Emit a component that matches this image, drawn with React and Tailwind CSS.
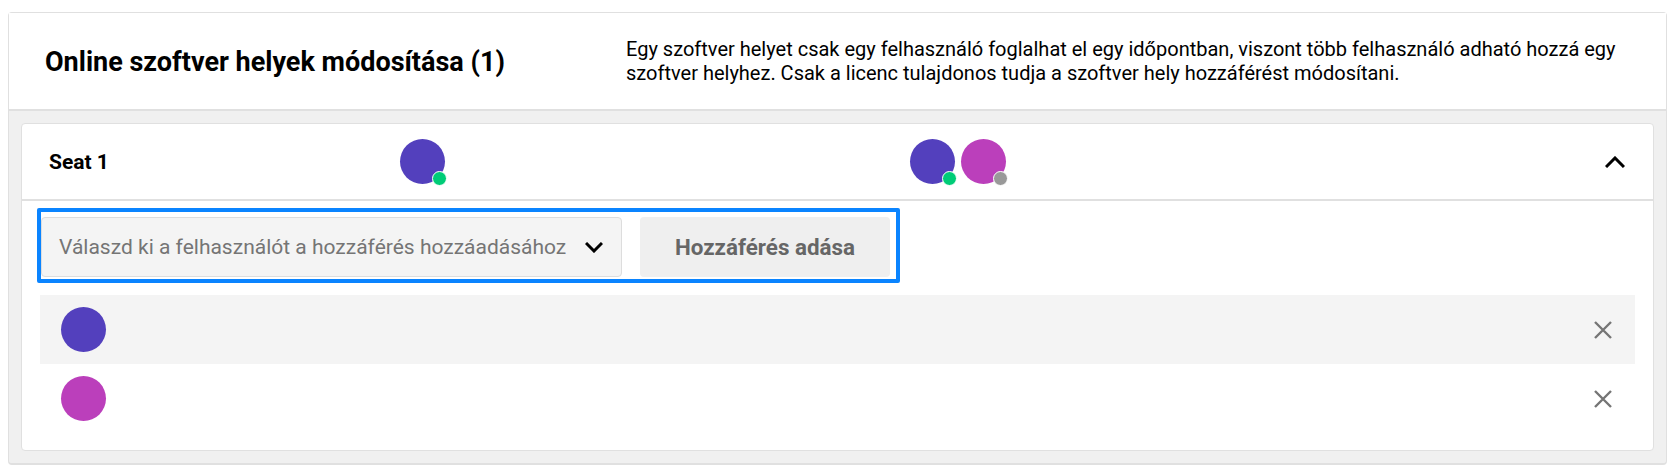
function Avatar({ color, status }) {
  return (
    <div className={`relative h-[45px] w-[45px] flex-shrink-0 rounded-full ${color}`}>
      {status === 'online' && (
        <span className="absolute right-[-2px] bottom-[-2px] h-[15px] w-[15px] rounded-full border border-white bg-[#00cc77]" />
      )}
      {status === 'offline' && (
        <span className="absolute right-[-2px] bottom-[-2px] h-[15px] w-[15px] rounded-full border border-white bg-[#999999]" />
      )}
    </div>
  );
}

function CloseIcon() {
  return (
    <svg width="18" height="18" viewBox="0 0 18 18" fill="none" stroke="#757575" strokeWidth="2.4">
      <path d="M1 1l16 16M17 1L1 17" />
    </svg>
  );
}

function UserRow({ color, shaded }) {
  return (
    <div className={`flex h-[69px] items-center justify-between pr-[23px] pl-[21px] ${shaded ? 'bg-[#f4f4f4]' : ''}`}>
      <Avatar color={color} />
      <CloseIcon />
    </div>
  );
}

export default function App() {
  return (
    <div className="h-[474px] bg-white pt-3 pr-[6px] pl-2 font-['Roboto',sans-serif] text-black">
      <div className="rounded-[4px] border border-b-2 border-[#e0e0e0] bg-[#f0f0f0]">
        <div className="flex h-[98px] items-center border-b-2 border-[#e0e0e0] bg-white pl-[36px]">
          <h1 className="w-[581px] pt-[2px] text-[27px] font-bold">Online szoftver helyek módosítása (1)</h1>
          <p className="w-[1020px] text-[20px] leading-[24px]">
            Egy szoftver helyet csak egy felhasználó foglalhat el egy időpontban, viszont több felhasználó adható hozzá egy szoftver helyhez. Csak a licenc tulajdonos tudja a szoftver hely hozzáférést módosítani.
          </p>
        </div>
        <div className="px-3 py-3">
          <div className="h-[328px] rounded-[4px] border border-[#e0e0e0] bg-white">
            <div className="flex h-[77px] items-center border-b-2 border-[#e0e0e0] pr-[28px] pl-[27px]">
              <span className="w-[351px] pt-[2px] text-[21px] font-bold">Seat 1</span>
              <div className="w-[510px]">
                <Avatar color="bg-[#5340bd]" status="online" />
              </div>
              <div className="flex flex-1 gap-[6px]">
                <Avatar color="bg-[#5340bd]" status="online" />
                <Avatar color="bg-[#bb3fbb]" status="offline" />
              </div>
              <svg width="20" height="12" viewBox="0 0 20 12" fill="none" stroke="black" strokeWidth="3">
                <path d="M1 11l9-9 9 9" />
              </svg>
            </div>
            <div className="mt-[7px] ml-[15px] flex h-[75px] w-[863px] gap-[18px] rounded-[2px] border-4 border-[#0a84ff] pt-[5px] pb-[2px]">
              <div className="flex w-[581px] items-center justify-between rounded-[4px] border border-[#dddddd] bg-[#f4f4f4] pr-[18px] pl-[17px]">
                <span className="pt-[2px] text-[21px] whitespace-nowrap text-[#757575]">Válaszd ki a felhasználót a hozzáférés hozzáadásához</span>
                <svg width="18" height="11" viewBox="0 0 18 11" fill="none" stroke="black" strokeWidth="3">
                  <path d="M1 1l8 8 8-8" />
                </svg>
              </div>
              <button className="w-[250px] rounded-[4px] bg-[#efefef] pt-[2px] text-[22.4px] font-bold text-[#666666]">Hozzáférés adása</button>
            </div>
            <div className="mt-3 mr-[18px] ml-[18px]">
              <UserRow color="bg-[#5340bd]" shaded />
              <UserRow color="bg-[#bb3fbb]" />
            </div>
          </div>
        </div>
      </div>
    </div>
  );
}
